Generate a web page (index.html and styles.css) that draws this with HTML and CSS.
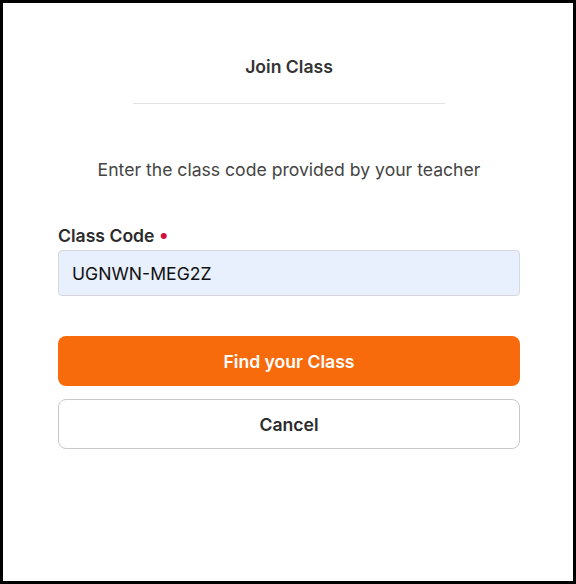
FILE: index.html
```html
<!DOCTYPE html>
<html lang="en">

<head>
    <meta charset="UTF-8">
    <meta name="viewport" content="width=device-width, initial-scale=1.0">
    <title>Join Class</title>
    <link rel="stylesheet" href="styles.css">
</head>

<body>
    <div class="modal">
        <h1 class="title">Join Class</h1>
        <hr class="divider">

        <p class="hint">Enter the class code provided by your teacher</p>

        <form class="form">
            <label class="label" for="code">Class Code <span class="req">•</span></label>
            <input class="input" id="code" type="text" value="UGNWN-MEG2Z">

            <div class="actions">
                <button type="button" class="btn btn-primary">Find your Class</button>
                <button type="button" class="btn btn-cancel">Cancel</button>
            </div>
        </form>
    </div>
</body>

</html>
```

FILE: styles.css
```css
* {
    box-sizing: border-box;
}

html,
body {
    margin: 0;
    height: 100%;
}

body {
    background-color: #000;
    padding: 3px;
    font-family: Inter, "Noto Sans", sans-serif;
    color: #2b2b2b;
}

.modal {
    background-color: #fff;
    height: 100%;
    padding: 54px 53px 0 55px;
    display: flex;
    flex-direction: column;
}

.title {
    margin: 0;
    text-align: center;
    font-size: 17.6px;
    font-weight: 600;
    line-height: 20px;
    color: #333;
}

.divider {
    width: 312px;
    margin: 26px auto 0;
    border: none;
    border-top: 1px solid #e3e3e3;
}

.hint {
    margin: 54px 0 0;
    text-align: center;
    font-size: 17.6px;
    line-height: 24px;
    color: #444;
}

.form {
    margin-top: 44px;
    display: flex;
    flex-direction: column;
}

.label {
    font-size: 17.6px;
    font-weight: 600;
    line-height: 20px;
    color: #2b2b2b;
}

.req {
    color: #d0103a;
    font-size: 19px;
    line-height: 1;
}

.input {
    margin-top: 4px;
    height: 46px;
    padding: 0 13px;
    font-family: inherit;
    font-size: 17.6px;
    color: #111;
    background-color: #e8f0fe;
    border: 1px solid #d5d9df;
    border-radius: 4px;
}

.actions {
    margin-top: 40px;
    display: flex;
    flex-direction: column;
    gap: 13px;
}

.btn {
    height: 50px;
    font-family: inherit;
    font-size: 17.6px;
    font-weight: 600;
    border-radius: 8px;
}

.btn-primary {
    background-color: #f76b0c;
    color: #fff;
    border: none;
}

.btn-cancel {
    background-color: #fff;
    color: #2b2b2b;
    border: 1px solid #c9c9c9;
}
```
